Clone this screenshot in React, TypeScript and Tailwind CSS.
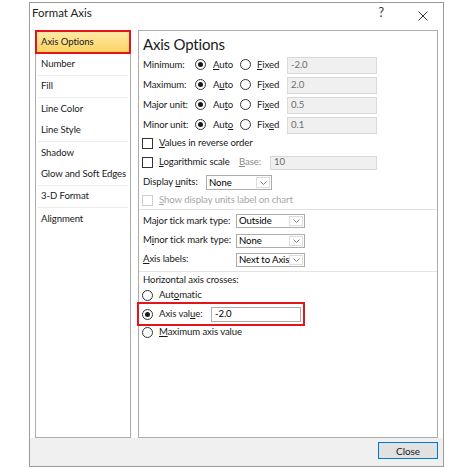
import React from "react"

type Kids = { children?: React.ReactNode }

// underlined access key letter
const K = ({ children }: Kids) => <span className="underline underline-offset-[1px]">{children}</span>

function Radio({ checked }: { checked?: boolean }) {
  return (
    <span className="grid size-[11px] shrink-0 place-items-center rounded-full border border-[#333] bg-white">
      {checked && <span className="size-[5px] rounded-full bg-[#1a1a1a]" />}
    </span>
  )
}

function Check({ disabled }: { disabled?: boolean }) {
  return (
    <span
      className={
        disabled
          ? "size-[11px] shrink-0 border border-[#cfcfcf] bg-white"
          : "size-[11px] shrink-0 border border-[#333] bg-white"
      }
    />
  )
}

function Chevron() {
  return (
    <svg width="7" height="4" viewBox="0 0 7 4" className="text-[#777]">
      <polyline points="0.5,0.5 3.5,3.5 6.5,0.5" fill="none" stroke="currentColor" strokeWidth="0.9" />
    </svg>
  )
}

function Select({ value, className }: { value: string; className: string }) {
  return (
    <div className={"flex shrink-0 border border-[#acacac] bg-white " + className}>
      <span className="flex flex-1 items-center overflow-hidden pl-[2px] leading-none text-black">{value}</span>
      <span className="my-px mr-px flex w-[14px] shrink-0 items-center justify-center border border-[#dcdcdc] bg-white">
        <Chevron />
      </span>
    </div>
  )
}

type AxisRowProps = { label: string; auto: React.ReactNode; fixed: React.ReactNode; value: string }

function AxisRow({ label, auto, fixed, value }: AxisRowProps) {
  return (
    <div className="flex h-[20px] items-center">
      <span className="w-[52px] shrink-0 text-[#1a1a1a]">{label}</span>
      <span className="flex w-[45px] shrink-0 items-center gap-[7px]">
        <Radio checked />
        <span>{auto}</span>
      </span>
      <span className="flex w-[47px] shrink-0 items-center gap-[6px]">
        <Radio />
        <span>{fixed}</span>
      </span>
      <span className="flex h-[17px] w-[90px] shrink-0 items-center border border-[#d9d9d9] bg-[#f0f0f0] pl-[3px] text-[#6d6d6d]">
        {value}
      </span>
    </div>
  )
}

const navItems: { label: string; sep?: boolean }[] = [
  { label: "Number", sep: true },
  { label: "Fill", sep: true },
  { label: "Line Color" },
  { label: "Line Style", sep: true },
  { label: "Shadow" },
  { label: "Glow and Soft Edges", sep: true },
  { label: "3-D Format", sep: true },
  { label: "Alignment" },
]

export default function App() {
  return (
    <div className="h-[468px] w-[465px] whitespace-nowrap bg-white pl-[29px] pt-[2px] font-[Lato,'Liberation_Sans',sans-serif] text-[9.6px] tracking-[-0.1px] text-[#1a1a1a]">
      <div className="flex h-[465px] w-[415px] flex-col border border-[#9a9a9a] bg-white">
        {/* Title bar */}
        <div className="flex h-[27px] items-start">
          <span className="pl-[2px] text-[11.5px] leading-[20px] tracking-normal text-[#222]">Format Axis</span>
          <span className="ml-auto mr-[34px] text-[12.5px] leading-[20px] text-[#333]">?</span>
          <svg width="10" height="10" viewBox="0 0 10 10" className="mr-[15px] mt-[8px] text-[#333]">
            <path d="M0.5 0.5 L9.5 9.5 M9.5 0.5 L0.5 9.5" stroke="currentColor" strokeWidth="1" />
          </svg>
        </div>

        {/* Body */}
        <div className="flex h-[408px]">
          {/* Left nav */}
          <div className="ml-[5px] flex w-[96px] shrink-0 flex-col border border-[#acacac] bg-white">
            <div className="-mx-px -mt-px flex h-[24px] items-center border-2 border-[#e3141c] bg-gradient-to-b from-[#fee9a6] to-[#fbd35f] pl-[4px] text-[#1a1a1a]">
              Axis Options
            </div>
            {navItems.map((it) => (
              <div
                key={it.label}
                className={
                  it.sep
                    ? "mx-[2px] flex h-[22px] items-center border-b border-[#ececec] pl-[3px]"
                    : "mx-[2px] flex h-[22px] items-center pl-[3px]"
                }
              >
                {it.label}
              </div>
            ))}
          </div>

          {/* Right panel */}
          <div className="ml-[7px] flex w-[300px] shrink-0 flex-col border border-[#acacac] bg-white pl-[4px]">
            <div className="h-[24px] text-[15px] leading-[26px] tracking-[-0.2px] text-[#1a1a1a]">Axis Options</div>

            <AxisRow label="Minimum:" auto={<><K>A</K>uto</>} fixed={<><K>F</K>ixed</>} value="-2.0" />
            <AxisRow label="Maximum:" auto={<>A<K>u</K>to</>} fixed={<>F<K>i</K>xed</>} value="2.0" />
            <AxisRow label="Major unit:" auto={<>Au<K>t</K>o</>} fixed={<>Fi<K>x</K>ed</>} value="0.5" />
            <AxisRow label="Minor unit:" auto={<>Aut<K>o</K></>} fixed={<>Fix<K>e</K>d</>} value="0.1" />

            <div className="-ml-px flex h-[17px] items-center gap-[6px]">
              <Check />
              <span>
                <K>V</K>alues in reverse order
              </span>
            </div>
            <div className="-ml-px flex h-[21px] items-center">
              <Check />
              <span className="ml-[6px] w-[80px] shrink-0">
                <K>L</K>ogarithmic scale
              </span>
              <span className="w-[31px] shrink-0 text-[#8a8a8a]">
                <K>B</K>ase:
              </span>
              <span className="flex h-[14px] w-[107px] shrink-0 items-center border border-[#d9d9d9] bg-[#f0f0f0] pl-[3px] text-[#6d6d6d]">
                10
              </span>
            </div>
            <div className="flex h-[19px] items-center">
              <span className="w-[63px] shrink-0">
                Display <K>u</K>nits:
              </span>
              <Select value="None" className="h-[15px] w-[66px]" />
            </div>
            <div className="-ml-px flex h-[16px] items-center gap-[6px] text-[#a6a6a6]">
              <Check disabled />
              <span>
                <K>S</K>how display units label on chart
              </span>
            </div>

            <div className="-ml-[4px] mt-px border-t border-[#e3e3e3]" />

            <div className="mt-px flex h-[20px] items-center">
              <span className="w-[93px] shrink-0">
                Ma<K>j</K>or tick mark type:
              </span>
              <Select value="Outside" className="h-[14px] w-[69px]" />
            </div>
            <div className="flex h-[19px] items-center">
              <span className="w-[93px] shrink-0">
                M<K>i</K>nor tick mark type:
              </span>
              <Select value="None" className="h-[14px] w-[69px]" />
            </div>
            <div className="flex h-[19px] items-center">
              <span className="w-[93px] shrink-0">
                <K>A</K>xis labels:
              </span>
              <Select value="Next to Axis" className="h-[14px] w-[69px]" />
            </div>

            <div className="-ml-[4px] mt-[2px] border-t border-[#e3e3e3]" />

            <div className="flex h-[17px] items-center">Horizontal axis crosses:</div>
            <div className="-ml-[1px] flex h-[13px] items-center gap-[6px]">
              <Radio />
              <span>
                Aut<K>o</K>matic
              </span>
            </div>
            <div className="-ml-[6px] flex h-[24px] w-[168px] items-center border-2 border-[#e3141c] pl-[3px]">
              <Radio checked />
              <span className="ml-[6px] w-[52px] shrink-0">
                Axis val<K>u</K>e:
              </span>
              <span className="flex h-[15px] w-[90px] shrink-0 items-center border border-[#adadad] bg-white pl-[3px] text-black">
                -2.0
              </span>
            </div>
            <div className="-ml-[1px] flex h-[12px] items-center gap-[6px]">
              <Radio />
              <span>
                <K>M</K>aximum axis value
              </span>
            </div>
          </div>
        </div>

        {/* Footer */}
        <div className="flex flex-1 items-start justify-end bg-[#f0f0f0] pr-[5px] pt-[4px]">
          <button
            type="button"
            className="flex h-[17px] w-[60px] items-center justify-center border border-[#0078d7] bg-[#e1e1e1] text-[10px] leading-none text-[#1a1a1a]"
          >
            Close
          </button>
        </div>
      </div>
    </div>
  )
}
